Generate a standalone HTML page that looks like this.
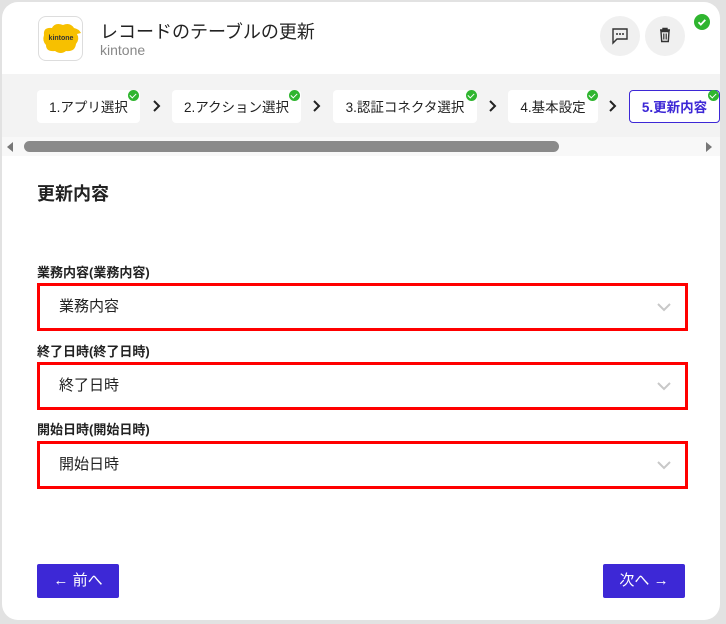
<!DOCTYPE html>
<html><head><meta charset="utf-8"><style>
*{box-sizing:border-box;margin:0;padding:0}
body{width:726px;height:624px;background:#e2e2e2;font-family:"Liberation Sans","Noto Sans CJK JP",sans-serif;position:relative;overflow:hidden;color:#222}
.card{position:absolute;left:2px;top:2px;width:718px;height:618px;background:#fff;border-radius:16px;overflow:hidden}
.abs{position:absolute}
.logo{left:36px;top:14px;width:45px;height:45px;border:1px solid #ddd;border-radius:8px;background:#fff}
.title{left:98px;top:16px;font-size:18px;color:#222}
.sub{left:98px;top:40px;font-size:14px;color:#888}
.circ{width:40px;height:40px;border-radius:50%;background:#f0f0f0;top:14px}
.bar{left:0;top:72px;width:718px;height:63px;background:#f3f3f3}
.pill{top:88px;height:33px;background:#fff;border-radius:4px;font-size:13.5px;line-height:35px;text-align:center;color:#222}
.chk{width:11px;height:11px;border-radius:50%;background:#2fb52f;top:88px}
.chk:after{content:"";position:absolute;left:3px;top:2px;width:3px;height:5px;border:solid #fff;border-width:0 1.5px 1.5px 0;transform:rotate(45deg)}
.chev{top:97px}
.scroll{left:0;top:135px;width:718px;height:19px;background:#f8f8f8}
.lbl{left:35px;font-size:13px;font-weight:bold;color:#222}
.sel{left:35px;width:651px;height:48px;border:3px solid #f00;font-size:15px;line-height:42px;padding-left:19px;color:#222}
.btn{top:562px;height:34px;width:82px;background:#3d28d6;color:#fff;border-radius:2px;font-size:15px;line-height:34px;text-align:center}
</style></head><body>
<div class="card">
<div class="abs logo"><svg width="45" height="45" viewBox="0 0 45 45"><path d="M5 18 Q4 10 13 11 Q16 5 24 8 Q31 5 35 11 Q40 12 42 16 L38 17 Q41 22 37 27 Q36 35 27 34 Q22 38 16 34 Q7 35 7 28 Q3 24 5 18Z" fill="#f7c000"/><text x="22" y="23" font-size="7" font-weight="bold" text-anchor="middle" fill="#333" font-family="Liberation Sans">kintone</text></svg></div>
<div class="abs title">レコードのテーブルの更新</div>
<div class="abs sub">kintone</div>
<div class="abs circ" style="left:598px"><svg width="40" height="40"><path d="M13 13h14v10H17l-4 4z" fill="none" stroke="#333" stroke-width="1.4"/><circle cx="17" cy="18" r="1" fill="#333"/><circle cx="20" cy="18" r="1" fill="#333"/><circle cx="23" cy="18" r="1" fill="#333"/></svg></div>
<div class="abs circ" style="left:643px"><svg width="40" height="40"><path d="M15 14h10M18 14v-1.5h4V14M16 15.5h8l-.7 10h-6.6z" fill="none" stroke="#333" stroke-width="1.4"/><path d="M18.5 17.5v6M20 17.5v6M21.5 17.5v6" stroke="#333" stroke-width=".8"/></svg></div>
<div class="abs" style="left:692px;top:12px;width:16px;height:16px;border-radius:50%;background:#2fb52f"><svg width="16" height="16"><path d="M4.5 8.3l2.3 2.3 4.5-4.7" fill="none" stroke="#fff" stroke-width="1.8"/></svg></div>
<div class="abs bar"></div>
<div class="abs pill" style="left:35px;width:103px">1.アプリ選択</div>
<div class="abs chk" style="left:126px"></div>
<svg class="abs chev" style="left:150px" width="10" height="14"><path d="M2 2l5 5-5 5" fill="none" stroke="#222" stroke-width="2"/></svg>
<div class="abs pill" style="left:170px;width:129px">2.アクション選択</div>
<div class="abs chk" style="left:287px"></div>
<svg class="abs chev" style="left:310px" width="10" height="14"><path d="M2 2l5 5-5 5" fill="none" stroke="#222" stroke-width="2"/></svg>
<div class="abs pill" style="left:331px;width:144px">3.認証コネクタ選択</div>
<div class="abs chk" style="left:464px"></div>
<svg class="abs chev" style="left:486px" width="10" height="14"><path d="M2 2l5 5-5 5" fill="none" stroke="#222" stroke-width="2"/></svg>
<div class="abs pill" style="left:506px;width:90px">4.基本設定</div>
<div class="abs chk" style="left:585px"></div>
<svg class="abs chev" style="left:606px" width="10" height="14"><path d="M2 2l5 5-5 5" fill="none" stroke="#222" stroke-width="2"/></svg>
<div class="abs pill" style="left:627px;width:91px;border:1px solid #3d28d6;color:#3d28d6;font-weight:bold;line-height:33px">5.更新内容</div>
<div class="abs chk" style="left:706px"></div>
<div class="abs scroll"></div>
<div class="abs" style="left:5px;top:140px;width:0;height:0;border-top:5px solid transparent;border-bottom:5px solid transparent;border-right:6px solid #777"></div>
<div class="abs" style="left:704px;top:140px;width:0;height:0;border-top:5px solid transparent;border-bottom:5px solid transparent;border-left:6px solid #777"></div>
<div class="abs" style="left:22px;top:139px;width:535px;height:11px;border-radius:6px;background:#8a8a8a"></div>
<div class="abs" style="left:35px;top:178px;font-size:18px;font-weight:bold">更新内容</div>
<div class="abs lbl" style="top:260px">業務内容(業務内容)</div>
<div class="abs sel" style="top:281px">業務内容</div>
<div class="abs lbl" style="top:339px">終了日時(終了日時)</div>
<div class="abs sel" style="top:360px">終了日時</div>
<div class="abs lbl" style="top:417px">開始日時(開始日時)</div>
<div class="abs sel" style="top:439px">開始日時</div>
<svg class="abs" style="left:655px;top:300px" width="14" height="170"><path d="M1 2l6 6 6-6M1 81l6 6 6-6M1 160l6 6 6-6" fill="none" stroke="#c8c8c8" stroke-width="2"/></svg>
<div class="abs btn" style="left:35px">← 前へ</div>
<div class="abs btn" style="left:601px">次へ →</div>
</div>
</body></html>
